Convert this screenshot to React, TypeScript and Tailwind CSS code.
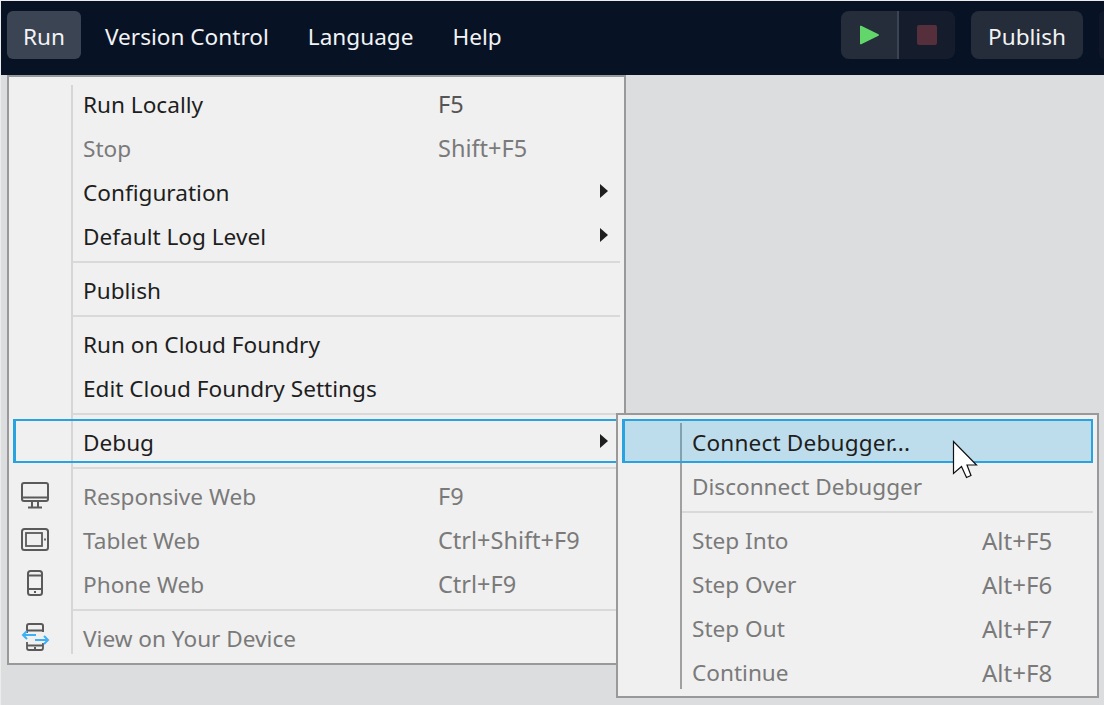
import type { ReactNode } from 'react'

type Item = {
  label: string
  shortcut?: string
  disabled?: boolean
  arrow?: boolean
  icon?: ReactNode
  highlight?: boolean
}

const MonitorIcon = () => (
  <svg width="28" height="27" viewBox="0 0 28 27" fill="none" stroke="#5a5a5a" strokeWidth="2">
    <rect x="1" y="1" width="26" height="18" rx="2" />
    <path d="M1 15.500h26M11 19v6M17 19v6M7 25.500h14" />
  </svg>
)

const TabletIcon = () => (
  <svg width="28" height="23" viewBox="0 0 28 23" fill="none" stroke="#5a5a5a" strokeWidth="2">
    <rect x="1" y="1" width="26" height="21" rx="2.500" />
    <rect x="5" y="5" width="16" height="13" strokeWidth="1.800" />
    <path d="M24 10.500v2" strokeWidth="1.800" />
  </svg>
)

const PhoneIcon = () => (
  <svg width="16" height="26" viewBox="0 0 16 26" fill="none" stroke="#5a5a5a" strokeWidth="2">
    <rect x="1" y="1" width="14" height="24" rx="2.500" />
    <path d="M1 5.500h14M1 19h14" strokeWidth="1.800" />
    <path d="M7 22h2" strokeWidth="1.800" />
  </svg>
)

const DeviceIcon = () => (
  <svg width="29" height="28" viewBox="0 0 29 28" fill="none">
    <path d="M6 10V3a2 2 0 0 1 2-2h12a2 2 0 0 1 2 2v6M6 7.500h16" stroke="#5a5a5a" strokeWidth="2" />
    <path d="M6 19v6a2 2 0 0 0 2 2h12a2 2 0 0 0 2-2v-5M6 22.500h16M13 25h2" stroke="#5a5a5a" strokeWidth="1.800" />
    <path d="M15 12H2M6 8l-4 4 4 4" stroke="#3fb0f5" strokeWidth="2" />
    <path d="M14 17h13M23 13l4 4-4 4" stroke="#3fb0f5" strokeWidth="2" />
  </svg>
)

const runGroups: Item[][] = [
  [
    { label: 'Run Locally', shortcut: 'F5' },
    { label: 'Stop', shortcut: 'Shift+F5', disabled: true },
    { label: 'Configuration', arrow: true },
    { label: 'Default Log Level', arrow: true },
  ],
  [{ label: 'Publish' }],
  [{ label: 'Run on Cloud Foundry' }, { label: 'Edit Cloud Foundry Settings' }],
  [{ label: 'Debug', arrow: true, highlight: true }],
  [
    { label: 'Responsive Web', shortcut: 'F9', disabled: true, icon: <MonitorIcon /> },
    { label: 'Tablet Web', shortcut: 'Ctrl+Shift+F9', disabled: true, icon: <TabletIcon /> },
    { label: 'Phone Web', shortcut: 'Ctrl+F9', disabled: true, icon: <PhoneIcon /> },
  ],
  [{ label: 'View on Your Device', disabled: true, icon: <DeviceIcon /> }],
]

const debugGroups: Item[][] = [
  [{ label: 'Connect Debugger...', highlight: true }, { label: 'Disconnect Debugger', disabled: true }],
  [
    { label: 'Step Into', shortcut: 'Alt+F5', disabled: true },
    { label: 'Step Over', shortcut: 'Alt+F6', disabled: true },
    { label: 'Step Out', shortcut: 'Alt+F7', disabled: true },
    { label: 'Continue', shortcut: 'Alt+F8', disabled: true },
  ],
]

function RunRow({ item }: { item: Item }) {
  return (
    <div className={`relative flex h-11 items-center ${item.disabled ? 'text-[#7a7a7a]' : 'text-[#1e1e1e]'}`}>
      {item.highlight && (
        <div className="absolute -left-[60px] -top-[2px] h-11 w-[620px] border-2 border-l-[3px] border-[#29a3e0]" />
      )}
      <div className="-ml-[64px] -mt-[4px] flex w-[52px] shrink-0 justify-center">{item.icon}</div>
      <div className="ml-[22px] w-[355px] shrink-0">{item.label}</div>
      <div className={`text-[23.5px] ${item.disabled ? '' : 'text-[#555555]'}`}>{item.shortcut}</div>
      {item.arrow && (
        <div className="absolute left-[527px] top-[13px] h-0 w-0 border-y-[7px] border-l-[8px] border-y-transparent border-l-[#1e1e1e]" />
      )}
    </div>
  )
}

function DebugRow({ item }: { item: Item }) {
  return (
    <div className={`relative flex h-11 items-center ${item.disabled ? 'text-[#7a7a7a]' : 'text-[#1e1e1e]'}`}>
      {item.highlight && (
        <div className="absolute -left-[60px] -top-[2px] right-[4px] h-11 border-2 border-l-[3px] border-[#29a3e0] bg-[#29a3e0]/25" />
      )}
      <div className={`relative ml-[10px] w-[290px] shrink-0 ${item.highlight ? 'tracking-[0.17px]' : ''}`}>{item.label}</div>
      <div className="text-[24px]">{item.shortcut}</div>
    </div>
  )
}

function Separator() {
  return <div className="mb-[6px] mr-[4px] mt-[2px] h-[2px] bg-[#d9d9d9]" />
}

export default function App() {
  return (
    <div
      className="h-[705px] w-[1104px] overflow-hidden border-l border-t border-[#ececec] bg-[#dcddde] text-[22.6px] leading-none"
      style={{ fontFamily: '"Noto Sans", "Open Sans", sans-serif' }}
    >
      <header className="flex h-[74px] items-start bg-[#081225] pl-[6px] pt-[10px] text-[#f2f3f5]">
        <div className="flex h-12 w-[74px] items-center justify-center rounded-md bg-[#3b4452] pt-1">Run</div>
        <div className="ml-[24px] flex h-12 items-center pt-1">Version Control</div>
        <div className="ml-[39px] flex h-12 items-center pt-1">Language</div>
        <div className="ml-[39px] flex h-12 items-center pt-1">Help</div>
        <div className="ml-auto flex h-12 w-[114px] overflow-hidden rounded-lg">
          <div className="flex w-[56px] items-center justify-center bg-[#252d3b]">
            <svg width="20" height="20" viewBox="0 0 20 20">
              <path d="M1 1.500v17a.8.8 0 0 0 1.200.7L19.500 10.700a.8.8 0 0 0 0-1.400L2.200.800A.8.8 0 0 0 1 1.500z" fill="#62d66a" />
            </svg>
          </div>
          <div className="w-[2px] bg-[#3b4452]" />
          <div className="flex w-[56px] items-center justify-center bg-[#151c2b]">
            <div className="h-5 w-5 rounded-[2px] bg-[#552f3b]" />
          </div>
        </div>
        <div className="ml-4 flex h-12 w-[112px] items-center justify-center rounded-lg bg-[#252d3b] pt-1">Publish</div>
        <div className="ml-4 h-12 w-[5px] shrink-0 rounded-l-lg bg-[#0f1829]" />
      </header>

      <div className="relative ml-[6px] h-[590px] w-[619px] border-2 border-[#999999] bg-[#f0f0f0] pb-[9px] pt-2">
        <div className="ml-[62px] flex h-full flex-col border-l-2 border-[#d6d6d6]">
          <div className="-mt-[2px]">
            {runGroups.map((group, i) => (
              <div key={i}>
                {i > 0 && <Separator />}
                {group.map((item) => (
                  <RunRow key={item.label} item={item} />
                ))}
              </div>
            ))}
          </div>
        </div>

        <div className="absolute left-[607px] top-[336px] h-[285px] w-[483px] border-2 border-[#999999] bg-[#f0f0f0] pb-[7px] pt-2">
          <div className="ml-[62px] flex h-full flex-col border-l-2 border-[#a0a0a0]">
            <div className="-mt-[2px]">
              {debugGroups.map((group, i) => (
                <div key={i}>
                  {i > 0 && <Separator />}
                  {group.map((item) => (
                    <DebugRow key={item.label} item={item} />
                  ))}
                </div>
              ))}
            </div>
          </div>
        </div>

        <svg className="absolute left-[943px] top-[363px]" width="26" height="40" viewBox="0 0 26 40">
          <path d="M1.500 1.500V33.500L9.500 26.500L14.500 37.500L19 35.500L15 25H24.500Z" fill="#ffffff" stroke="#111111" strokeWidth="1.200" />
        </svg>
      </div>
    </div>
  )
}
